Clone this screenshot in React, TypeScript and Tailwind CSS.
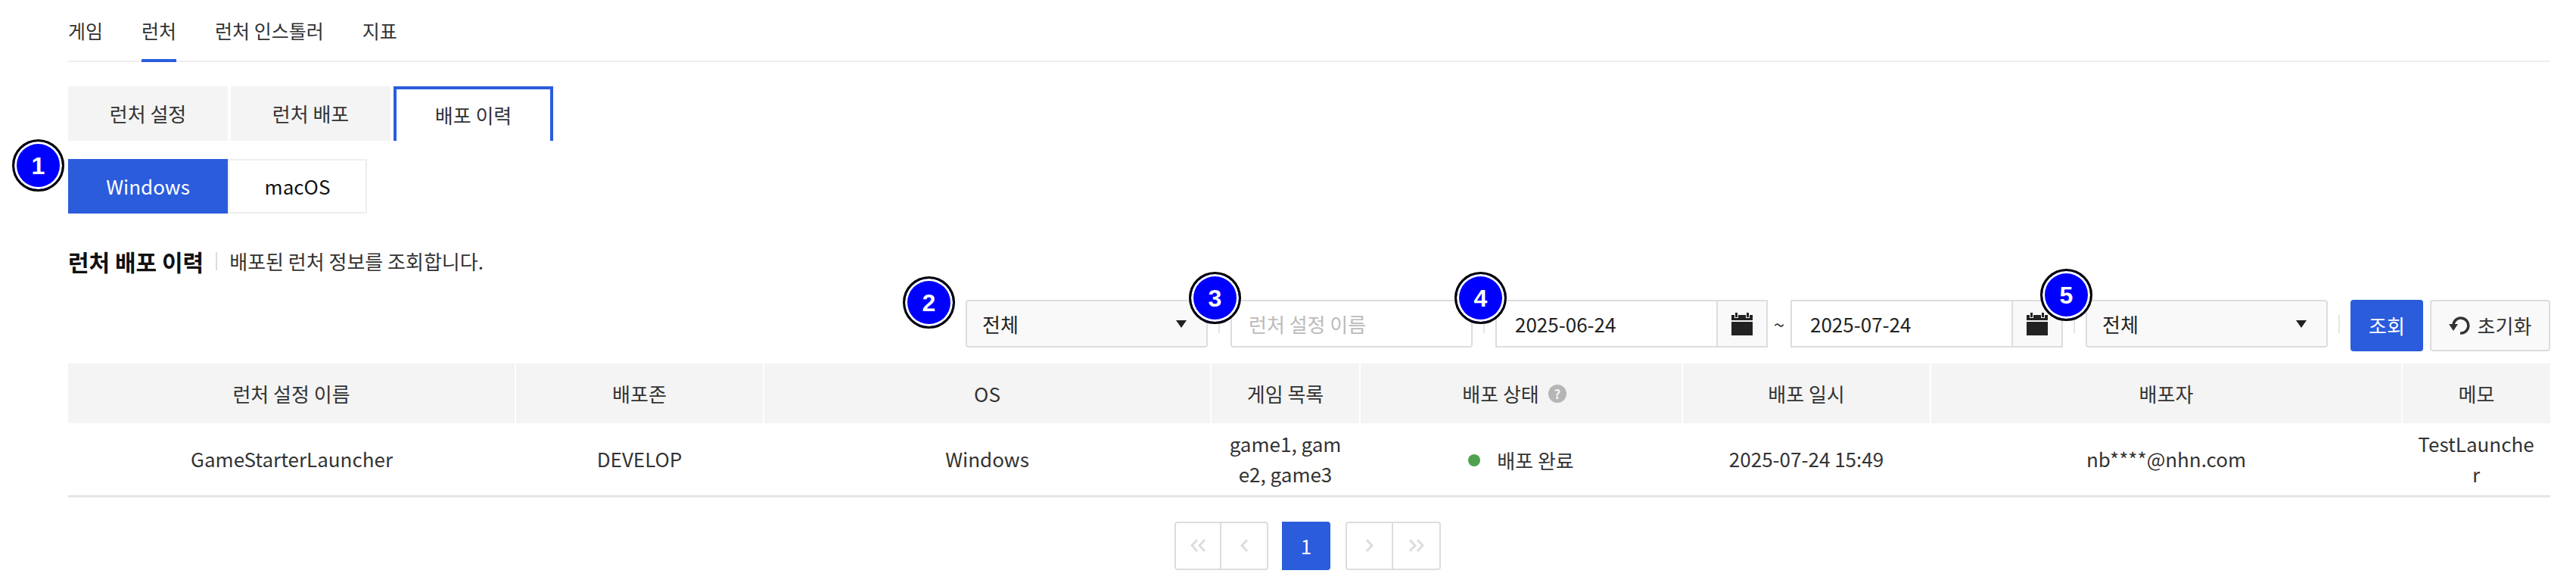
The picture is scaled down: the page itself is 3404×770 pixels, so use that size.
import { ReactNode } from 'react';

const font = "font-['Noto_Sans_CJK_KR','Noto_Sans',sans-serif]";

function Badge({ n, className }: { n: number; className: string }) {
  return (
    <div
      className={`absolute z-10 flex h-[69px] w-[69px] items-center justify-center rounded-full border-[3px] border-black bg-[#0000ff] font-['Liberation_Sans',sans-serif] text-[32px] font-bold text-white shadow-[inset_0_0_0_3px_#fff] ${className}`}
    >
      {n}
    </div>
  );
}

function CalendarIcon() {
  return (
    <svg width="28" height="30" viewBox="0 0 28 30" fill="#222">
      <rect x="5" y="0" width="3" height="6" />
      <rect x="20" y="0" width="3" height="6" />
      <path d="M0 3h4v4h5V3h10v4h5V3h4v7H0z" />
      <rect x="0" y="12" width="28" height="18" />
    </svg>
  );
}

function ResetIcon() {
  return (
    <svg width="28" height="24" viewBox="0 0 28 24" fill="none">
      <path d="M6 10 A10 10 0 1 1 15 22" stroke="#333" strokeWidth="3.5" />
      <path d="M0 10h12l-6 9z" fill="#333" />
    </svg>
  );
}

function Arrow() {
  return <span className="h-0 w-0 border-x-[7px] border-t-[10px] border-x-transparent border-t-[#222]" />;
}

function Select() {
  return (
    <div className="flex h-[63px] w-[320px] items-center justify-between rounded border-2 border-[#ddd] bg-[#f9f9f9] pl-[20px] pr-[26px] text-[#222]">
      전체
      <Arrow />
    </div>
  );
}

function Sep() {
  return <span className="mx-[14px] h-[24px] w-[2px] bg-[#e5e5e5]" />;
}

function DateInput({ value }: { value: string }) {
  return (
    <div className="flex h-[63px] w-[360px] border-2 border-[#ddd] text-[#222]">
      <div className="flex flex-1 items-center pl-[24px]">{value}</div>
      <div className="flex w-[66px] items-center justify-center border-l-2 border-[#ddd] bg-[#f9f9f9]">
        <CalendarIcon />
      </div>
    </div>
  );
}

function PageBtn({ children, className = '' }: { children: ReactNode; className?: string }) {
  return <div className={`flex h-full items-center justify-center ${className}`}>{children}</div>;
}

function Chevron({ dir, double }: { dir: 'l' | 'r'; double?: boolean }) {
  const d = dir === 'l' ? 'M9 1 L2 8.5 L9 16' : 'M2 1 L9 8.5 L2 16';
  return (
    <svg width={double ? 21 : 11} height="17" viewBox={double ? '0 0 21 17' : '0 0 11 17'} fill="none" stroke="#ddd" strokeWidth="3">
      <path d={d} />
      {double && <path d={d} transform="translate(10 0)" />}
    </svg>
  );
}

const columns = [
  { title: '런처 설정 이름', width: 591 },
  { title: '배포존', width: 328 },
  { title: 'OS', width: 591 },
  { title: '게임 목록', width: 197 },
  { title: '배포 상태', width: 426, help: true },
  { title: '배포 일시', width: 328 },
  { title: '배포자', width: 623 },
  { title: '메모', width: 196 },
];

export default function App() {
  return (
    <div className={`h-[770px] w-[3404px] bg-white pl-[90px] pr-[34px] pt-[24px] text-[26px] leading-[36px] text-[#333] ${font}`}>
      <nav className="flex h-[58px] gap-[51px] border-b-2 border-[#eee] text-[25px] leading-[32px]">
        <span className="h-[58px]">게임</span>
        <span className="h-[58px] border-b-4 border-[#2b5cdc]">런처</span>
        <span className="h-[58px]">런처 인스톨러</span>
        <span className="h-[58px]">지표</span>
      </nav>

      <div className="mt-[32px] flex h-[72px] gap-[4px]">
        <div className="flex w-[211px] items-center justify-center bg-[#f4f4f4]">런처 설정</div>
        <div className="flex w-[211px] items-center justify-center bg-[#f4f4f4]">런처 배포</div>
        <div className="flex w-[211px] items-center justify-center border-x-4 border-t-4 border-[#2b5cdc] bg-white">배포 이력</div>
      </div>

      <div className="relative mt-[24px] flex h-[72px]">
        <Badge n={1} className="left-[-74px] top-[-26px]" />
        <div className="flex w-[211px] items-center justify-center bg-[#2b5cdc] text-white">Windows</div>
        <div className="flex w-[184px] items-center justify-center border-2 border-[#eee] text-[#111]">macOS</div>
      </div>

      <div className="mt-[45px] flex h-[36px] items-center">
        <h2 className="text-[30px] font-bold text-[#111]">런처 배포 이력</h2>
        <span className="mx-[16px] h-[24px] w-[2px] bg-[#ddd]" />
        <p>배포된 런처 정보를 조회합니다.</p>
      </div>

      <div className="relative mt-[33px] flex h-[68px] items-start justify-end">
        <Badge n={2} className="left-[1103px] top-[-31px]" />
        <Badge n={3} className="left-[1481px] top-[-37px]" />
        <Badge n={4} className="left-[1832px] top-[-37px]" />
        <Badge n={5} className="left-[2606px] top-[-41px]" />
        <div className="flex h-[63px] items-center">
          <Select />
          <Sep />
          <div className="flex h-[63px] w-[320px] items-center rounded border-2 border-[#ddd] pl-[22px] text-[#bbb]">런처 설정 이름</div>
          <Sep />
          <DateInput value="2025-06-24" />
          <span className="w-[30px] text-center text-[#333]">~</span>
          <DateInput value="2025-07-24" />
          <Sep />
          <Select />
          <Sep />
        </div>
        <div className="flex h-[68px] w-[96px] items-center justify-center rounded bg-[#2b5cdc] text-white">조회</div>
        <div className="ml-[9px] flex h-[68px] w-[159px] items-center justify-center gap-[10px] rounded border-2 border-[#ddd] bg-[#f9f9f9]">
          <ResetIcon />
          초기화
        </div>
      </div>

      <table className="mt-[16px] w-[3280px] table-fixed border-collapse text-center">
        <colgroup>
          {columns.map((c) => (
            <col key={c.title} style={{ width: c.width }} />
          ))}
        </colgroup>
        <thead>
          <tr className="h-[79px] bg-[#f4f4f4]">
            {columns.map((c) => (
              <th key={c.title} className="border-r-2 border-white font-normal last:border-r-0">
                {c.help ? (
                  <span className="inline-flex items-center gap-[12px] pr-[18px]">
                    {c.title}
                    <span className="flex h-[24px] w-[24px] items-center justify-center rounded-full bg-[#b5b5b5] text-[17px] font-bold leading-none text-[#f4f4f4]">?</span>
                  </span>
                ) : (
                  c.title
                )}
              </th>
            ))}
          </tr>
        </thead>
        <tbody>
          <tr className="h-[96px] border-b-[3px] border-[#e5e5e5] leading-[40px]">
            <td className="px-[20px]">GameStarterLauncher</td>
            <td className="px-[20px]">DEVELOP</td>
            <td className="px-[20px]">Windows</td>
            <td className="break-all px-[20px]">game1, game2, game3</td>
            <td className="px-[20px]">
              <span className="inline-flex items-center gap-[22px]">
                <span className="h-[16px] w-[16px] rounded-full bg-[#4ea24f]" />
                배포 완료
              </span>
            </td>
            <td className="px-[20px]">2025-07-24 15:49</td>
            <td className="px-[20px]">nb****@nhn.com</td>
            <td className="break-all px-[20px]">TestLauncher</td>
          </tr>
        </tbody>
      </table>

      <div className="mt-[32px] flex h-[64px] justify-center pr-[4px]">
        <div className="flex h-full divide-x-2 divide-[#ddd] rounded border-2 border-[#ddd]">
          <PageBtn className="w-[60px]"><Chevron dir="l" double /></PageBtn>
          <PageBtn className="w-[60px]"><Chevron dir="l" /></PageBtn>
        </div>
        <div className="ml-[18px] mr-[20px] flex h-full w-[64px] items-center justify-center rounded-r bg-[#2b5cdc] text-white">1</div>
        <div className="flex h-full divide-x-2 divide-[#ddd] rounded border-2 border-[#ddd]">
          <PageBtn className="w-[61px]"><Chevron dir="r" /></PageBtn>
          <PageBtn className="w-[61px]"><Chevron dir="r" double /></PageBtn>
        </div>
      </div>
    </div>
  );
}
